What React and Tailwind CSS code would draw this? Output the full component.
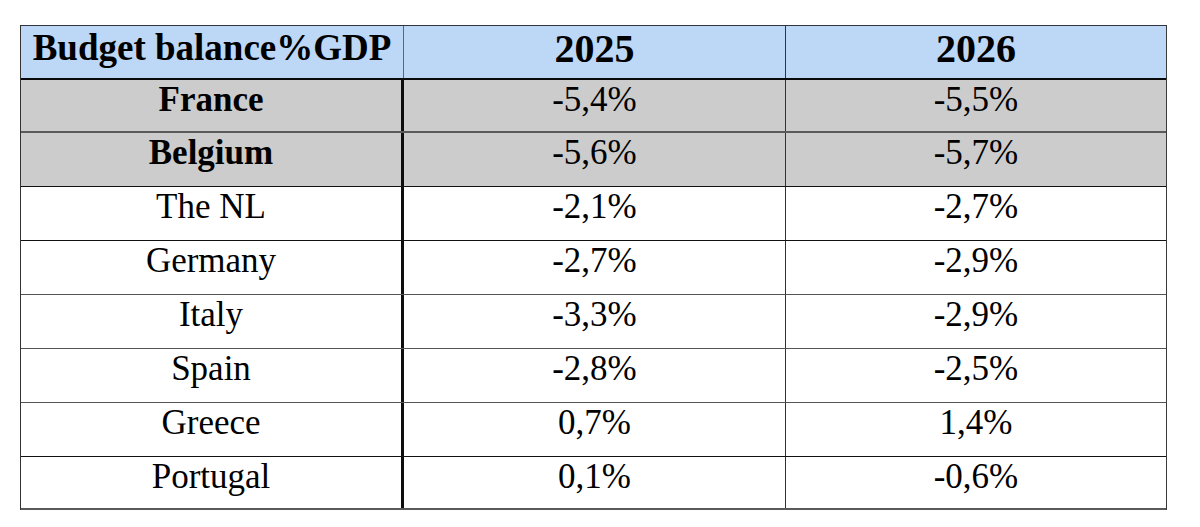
import React from "react";

const rows = [
  { name: "France", a: "-5,4%", b: "-5,5%", gray: true, bold: true, line: "border-b-[2px] border-b-[#5a5a5a]", h: "h-[53px]" },
  { name: "Belgium", a: "-5,6%", b: "-5,7%", gray: true, bold: true, line: "border-b border-b-[#111]", h: "h-[54px]" },
  { name: "The NL", a: "-2,1%", b: "-2,7%", line: "border-b border-b-[#111]", h: "h-[54px]" },
  { name: "Germany", a: "-2,7%", b: "-2,9%", line: "border-b border-b-[#555]", h: "h-[54px]" },
  { name: "Italy", a: "-3,3%", b: "-2,9%", line: "border-b border-b-[#555]", h: "h-[54px]" },
  { name: "Spain", a: "-2,8%", b: "-2,5%", line: "border-b border-b-[#555]", h: "h-[54px]" },
  { name: "Greece", a: "0,7%", b: "1,4%", line: "border-b border-b-[#111]", h: "h-[54px]" },
  { name: "Portugal", a: "0,1%", b: "-0,6%", line: "border-b-[2px] border-b-[#5a5a5a]", h: "h-[53px]" },
];

export default function App() {
  return (
    <div className="w-[1200px] h-[527px] bg-white pt-[25px] pl-[20px] font-['Liberation_Serif',serif] text-black">
      <div className="w-[1147px] border-t border-l border-r border-t-[#2f3440] border-l-[#333] border-r-[#3a3a3a]">
        <div className="flex h-[54px] bg-[#bdd7f7] border-b-[2px] border-b-[#0a0a0a]">
          <div className="w-[383px] border-r border-r-[#5f6470] text-center font-bold text-[37px] leading-[42px] pt-[1px]">
            Budget balance%GDP
          </div>
          <div className="w-[382px] border-r border-r-[#333] text-center font-bold text-[40px] leading-[46px]">
            2025
          </div>
          <div className="flex-1 text-center font-bold text-[40px] leading-[46px]">2026</div>
        </div>
        {rows.map((r) => (
          <div
            key={r.name}
            className={`flex ${r.h} ${r.line} ${r.gray ? "bg-[#cccccc]" : "bg-white"}`}
          >
            <div
              className={`w-[383px] border-r-[3px] border-r-[#0d0d0d] text-center text-[35px] leading-[40px] ${
                r.bold ? "font-bold" : ""
              }`}
            >
              {r.name}
            </div>
            <div className="w-[382px] border-r border-r-[#333] text-center text-[35px] leading-[40px]">
              {r.a}
            </div>
            <div className="flex-1 text-center text-[35px] leading-[40px]">{r.b}</div>
          </div>
        ))}
      </div>
    </div>
  );
}
